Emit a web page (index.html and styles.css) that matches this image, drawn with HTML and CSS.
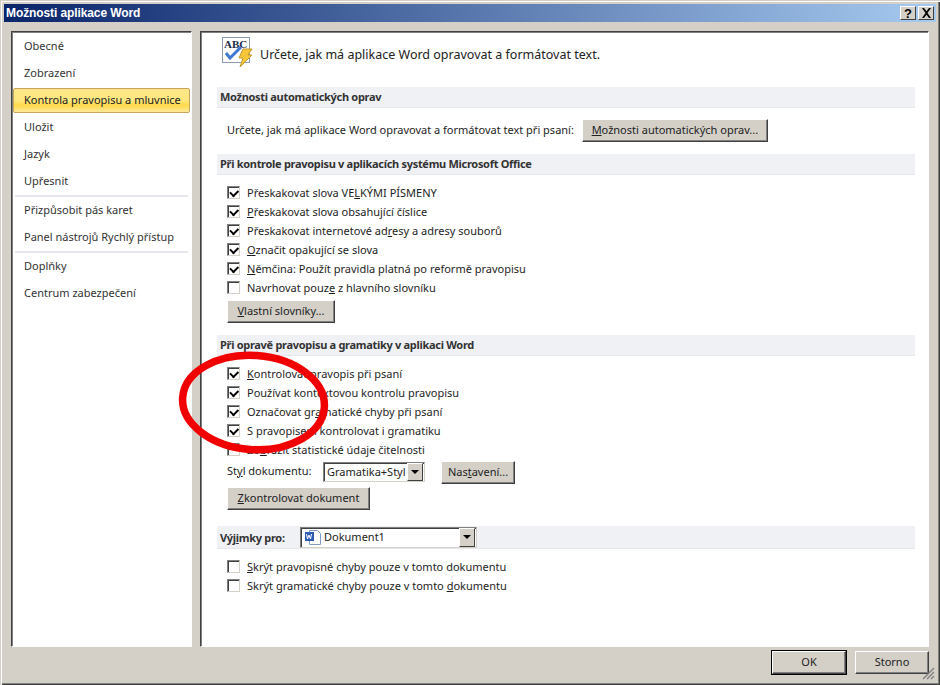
FILE: index.html
```html
<!DOCTYPE html>
<html lang="cs">
<head>
<meta charset="utf-8">
<title>Možnosti aplikace Word</title>
<link rel="stylesheet" href="styles.css">
</head>
<body>
<div class="window">
  <div class="titlebar">
    <span class="title">Možnosti aplikace Word</span>
    <div class="caption-buttons">
      <button class="cap">?</button>
      <button class="cap">
        <svg width="11" height="10" viewBox="0 0 11 10"><path d="M1 0h2l2.500 3.200L8 0h2L6.500 5 10 10H8L5.500 6.800 3 10H1l3.500-5z" fill="#000"/></svg>
      </button>
    </div>
  </div>
  <div class="main">
    <nav class="sidebar">
      <div class="nav-item">Obecné</div>
      <div class="nav-item">Zobrazení</div>
      <div class="nav-item active">Kontrola pravopisu a mluvnice</div>
      <div class="nav-item">Uložit</div>
      <div class="nav-item">Jazyk</div>
      <div class="nav-item">Upřesnit</div>
      <div class="nav-sep"></div>
      <div class="nav-item">Přizpůsobit pás karet</div>
      <div class="nav-item">Panel nástrojů Rychlý přístup</div>
      <div class="nav-sep"></div>
      <div class="nav-item">Doplňky</div>
      <div class="nav-item">Centrum zabezpečení</div>
    </nav>
    <section class="content">
      <div class="intro">
        <svg class="intro-icon" width="34" height="32" viewBox="0 0 34 32">
          <rect x="1.500" y="1.500" width="27" height="25" fill="#fff" stroke="#8a9ab5"/>
          <text x="3" y="12" class="abc">ABC</text>
          <path d="M5 17l4 5L20 11" fill="none" stroke="#3f78d0" stroke-width="3"/>
          <path d="M22 13h9l-4 6h4L19 31l3-9h-4z" fill="#f8c63a" stroke="#c29a2a"/>
        </svg>
        <span class="intro-text">Určete, jak má aplikace Word opravovat a formátovat text.</span>
      </div>

      <h2 class="head">Možnosti automatických oprav</h2>
      <div class="auto-row">
        <span>Určete, jak má aplikace Word opravovat a formátovat text při psaní:</span>
        <button class="btn btn-auto"><u>M</u>ožnosti automatických oprav...</button>
      </div>

      <h2 class="head head-2">Při kontrole pravopisu v aplikacích systému Microsoft Office</h2>
      <div class="checks">
        <label class="check"><span class="box on"></span><span>Přeskakovat slova VE<u>L</u>KÝMI PÍSMENY</span></label>
        <label class="check"><span class="box on"></span><span><u>P</u>řeskakovat slova obsahující číslice</span></label>
        <label class="check"><span class="box on"></span><span>Přeskakovat internetové ad<u>r</u>esy a adresy souborů</span></label>
        <label class="check"><span class="box on"></span><span><u>O</u>značit opakující se slova</span></label>
        <label class="check"><span class="box on"></span><span><u>N</u>ěmčina: Použít pravidla platná po reformě pravopisu</span></label>
        <label class="check"><span class="box"></span><span>Navrhovat pouz<u>e</u> z hlavního slovníku</span></label>
      </div>
      <button class="btn btn-dict"><u>V</u>lastní slovníky...</button>

      <h2 class="head head-3">Při opravě pravopisu a gramatiky v aplikaci Word</h2>
      <div class="checks">
        <label class="check"><span class="box on"></span><span><u>K</u>ontrolovat pravopis při psaní</span></label>
        <label class="check"><span class="box on"></span><span>Používat kontextovou kontrolu pravopisu</span></label>
        <label class="check"><span class="box on"></span><span>Označovat gr<u>a</u>matické chyby při psaní</span></label>
        <label class="check"><span class="box on"></span><span>S pravopisem kontrolovat i <u>g</u>ramatiku</span></label>
        <label class="check"><span class="box"></span><span>Zo<u>b</u>razit statistické údaje čitelnosti</span></label>
      </div>
      <div class="style-row">
        <span class="style-label">St<u>y</u>l dokumentu:</span>
        <div class="select select-style"><span class="select-val">Gramatika+Styl</span><span class="arrow"></span></div>
        <button class="btn btn-set">Nas<u>t</u>avení...</button>
      </div>
      <button class="btn btn-check"><u>Z</u>kontrolovat dokument</button>

      <div class="head head-4">
        <span class="exc-label">Výj<u>i</u>mky pro:</span>
        <div class="select select-doc">
          <svg width="18" height="17" viewBox="0 0 18 17">
            <path d="M5.500 1.500h8l3 3v11h-11z" fill="#fff" stroke="#7f9cc4"/>
            <rect x="1" y="3" width="9" height="9" fill="#2b5bb5"/>
            <path d="M2.500 5l1 5 1.500-4 1.500 4 1-5" fill="none" stroke="#fff"/>
          </svg>
          <span class="select-val">Dokument1</span><span class="arrow"></span>
        </div>
      </div>
      <div class="checks checks-last">
        <label class="check"><span class="box"></span><span><u>S</u>krýt pravopisné chyby pouze v tomto dokumentu</span></label>
        <label class="check"><span class="box"></span><span>Skrýt gramatické chyby pouze v tomto <u>d</u>okumentu</span></label>
      </div>
    </section>
  </div>
  <div class="footer">
    <button class="btn btn-foot btn-default">OK</button>
    <button class="btn btn-foot">Storno</button>
    <svg class="grip" width="13" height="13" viewBox="0 0 13 13"><path d="M12 1L1 12M12 5L5 12M12 9L9 12" stroke="#808080" stroke-width="1.400"/></svg>
  </div>
  <svg class="ring" width="160" height="110" viewBox="0 0 160 110">
    <ellipse cx="77.500" cy="52.500" rx="71" ry="47" transform="rotate(4 77.500 52.500)" fill="none" stroke="#f00000" stroke-width="7.500"/>
  </svg>
</div>
</body>
</html>
```
FILE: styles.css
```css
* { box-sizing: border-box; }
html, body { margin: 0; padding: 0; }
body { width: 940px; height: 685px; overflow: hidden; font-family: "Noto Sans", sans-serif; font-size: 11px; color: #1e1e1e; }
.window { position: relative; width: 940px; height: 685px; background: #d4d0c8; padding: 4px 4px 4px; display: flex; flex-direction: column; box-shadow: inset 1px 1px 0 #d4d0c8, inset 2px 2px 0 #fff, inset -1px -1px 0 #404040, inset -2px -2px 0 #808080; }
.titlebar { height: 18px; flex: none; display: flex; align-items: center; justify-content: space-between; padding: 0 2px; background: linear-gradient(90deg, #0a246a, #a6caf0); }
.title { font-family: "Liberation Sans", sans-serif; font-weight: bold; font-size: 12px; letter-spacing: -0.1px; color: #fff; }
.caption-buttons { display: flex; gap: 2px; }
.cap { width: 16px; height: 14px; padding: 0; display: flex; align-items: center; justify-content: center; background: #d4d0c8; font: bold 13px "Liberation Sans", sans-serif; color: #000; border: 1px solid; border-color: #fff #404040 #404040 #fff; }
.main { flex: none; height: 616px; margin: 9px 7px 0; display: flex; gap: 8px; }
.sidebar { width: 181px; flex: none; background: #fff; padding: 1px; border: 1px solid; border-color: #404040 #fff #fff #404040; box-shadow: inset 1px 1px 0 #808080; }
.nav-item { height: 27px; line-height: 25px; padding-left: 11px; white-space: nowrap; color: #333; }
.nav-item.active { height: 25px; line-height: 22px; margin: 1px 0; border: 1px solid #c8a45c; border-radius: 2px; padding-left: 10px; background: linear-gradient(#fde68a, #ffe77f 50%, #ffd949 70%, #ffe99a); color: #222; }
.nav-sep { height: 2px; background: #e6e6ec; margin: 0 2px; }
.content { flex: 1; background: #fff; border: 1px solid; border-color: #404040 #fff #fff #404040; box-shadow: inset 1px 1px 0 #808080; padding: 4px 13px 0 16px; display: flex; flex-direction: column; align-items: flex-start; }
.intro { height: 35px; display: flex; align-items: center; gap: 5px; margin-left: 4px; padding-top: 1px; }
.intro-icon { flex: none; margin-bottom: 4px; }
.abc { font: bold 11px "Liberation Serif", serif; fill: #1c2a4a; }
.intro-text { font-size: 12.5px; color: #222; }
.head { width: 698px; margin: 16px 0 0; height: 21px; line-height: 19px; padding-left: 3px; background: #f0f1f5; border-bottom: 1px solid #e6e7ea; font-size: 11px; font-weight: bold; letter-spacing: -0.3px; color: #333; }
.head-2 { margin-top: 12px; }
.head-3 { margin-top: 12px; }
.head-4 { margin-top: 16px; height: 23px; display: flex; align-items: center; gap: 15px; letter-spacing: 0; }
.auto-row { margin: 11px 0 0 10px; display: flex; align-items: center; gap: 8px; height: 23px; white-space: nowrap; }
.auto-row > span { padding-bottom: 2px; }
.checks { margin: 8px 0 0 10px; display: flex; flex-direction: column; }
.checks-last { margin-top: 8px; }
.check { height: 19px; display: flex; align-items: center; gap: 7px; white-space: nowrap; }
.box { width: 13px; height: 13px; flex: none; position: relative; background: #fff; border: 1px solid; border-color: #808080 #d4d0c8 #d4d0c8 #808080; box-shadow: inset 1px 1px 0 #404040; }
.box.on::after { content: ""; position: absolute; left: 2px; top: 1px; width: 6px; height: 3.500px; border-left: 2px solid #000; border-bottom: 2px solid #000; transform: rotate(-45deg) translate(-1px, 1px); }
.btn { height: 23px; padding: 0 0 2px; background: #d4d0c8; font: 11px "Noto Sans", sans-serif; color: #222; border: 1px solid; border-color: #fff #404040 #404040 #fff; box-shadow: inset -1px -1px 0 #808080; }
.btn-auto { width: 186px; margin-left: 0; }
.btn-dict { width: 108px; margin: 3px 0 0 10px; }
.style-row { margin: 1px 0 0 10px; height: 24px; display: flex; align-items: center; }
.style-label { width: 96px; white-space: nowrap; padding-bottom: 4px; }
.select { display: flex; align-items: center; background: #fff; border: 1px solid; border-color: #808080 #d4d0c8 #d4d0c8 #808080; box-shadow: inset 1px 1px 0 #404040; }
.select-style { width: 102px; height: 20px; padding-left: 3px; }
.select-doc { width: 177px; height: 21px; padding-left: 3px; gap: 2px; }
.select-val { flex: 1; overflow: hidden; white-space: nowrap; font-weight: normal; color: #222; padding-bottom: 2px; }
.arrow { flex: none; width: 16px; height: 100%; margin: 1px 1px 1px 0; position: relative; background: #d4d0c8; border: 1px solid; border-color: #fff #404040 #404040 #fff; }
.arrow::after { content: ""; position: absolute; left: 3px; top: 6px; border: 4px solid transparent; border-top: 4px solid #000; border-bottom: 0; }
.btn-set { width: 74px; margin-left: 16px; }
.btn-check { width: 143px; margin: 3px 0 0 10px; }
.exc-label { width: 65px; font-weight: bold; letter-spacing: -0.3px; color: #333; white-space: nowrap; }
.footer { position: relative; flex: none; margin: 4px 7px 0 0; display: flex; justify-content: flex-end; gap: 9px; }
.btn-foot { width: 74px; height: 23px; }
.btn-default { outline: 1px solid #000; outline-offset: 0; }
.grip { position: absolute; right: -6px; bottom: -6px; }
.ring { position: absolute; left: 176px; top: 350px; pointer-events: none; }
```
